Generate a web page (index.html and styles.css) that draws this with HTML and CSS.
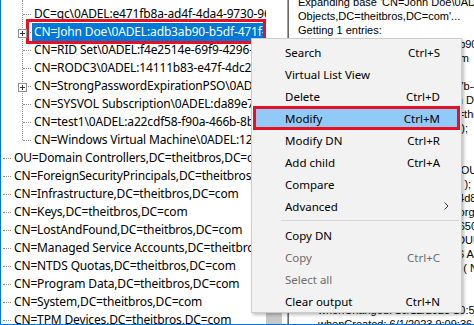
FILE: index.html
```html
<!DOCTYPE html>
<html lang="en">
<head>
    <meta charset="UTF-8">
    <title>Ldp - Deleted Objects</title>
    <link rel="stylesheet" href="styles.css">
</head>
<body>

    <div class="window">
        <div class="tree">
            <div class="group">
                <div class="node"><span class="label">DC=qc\0ADEL:e471fb8a-ad4f-4da4-9730-961c3f0a7e2b</span></div>
                <div class="node selected"><span class="expander"></span><span class="label">CN=John Doe\0ADEL:adb3ab90-b5df-471f-8b7e-2c9d4e1a5f03</span></div>
                <div class="node"><span class="label">CN=RID Set\0ADEL:f4e2514e-69f9-4296-a1c3-7d0e5b9f2a64</span></div>
                <div class="node"><span class="label">CN=RODC3\0ADEL:14111b83-e47f-4dc2-b9a0-3e6f1c8d5b27</span></div>
                <div class="node"><span class="expander"></span><span class="label">CN=StrongPasswordExpirationPSO\0ADEL:0c5d7e21-4a9b-4f3e-8d61-b2a7c9e05f18</span></div>
                <div class="node"><span class="label">CN=SYSVOL Subscription\0ADEL:da89e7b4-1f2c-4e6a-9b0d-5c8a3f7e2d91</span></div>
                <div class="node"><span class="label">CN=test1\0ADEL:a22cdf58-f90a-466b-8b7c-4e1d9a2f6c03</span></div>
                <div class="node"><span class="label">CN=Windows Virtual Machine\0ADEL:12c4f8e0-7b3d-4a59-a6e1-0d9c2b5f8e74</span></div>
            </div>
            <div class="node"><span class="label">OU=Domain Controllers,DC=theitbros,DC=com</span></div>
            <div class="node"><span class="label">CN=ForeignSecurityPrincipals,DC=theitbros,DC=com</span></div>
            <div class="node"><span class="label">CN=Infrastructure,DC=theitbros,DC=com</span></div>
            <div class="node"><span class="label">CN=Keys,DC=theitbros,DC=com</span></div>
            <div class="node"><span class="label">CN=LostAndFound,DC=theitbros,DC=com</span></div>
            <div class="node"><span class="label">CN=Managed Service Accounts,DC=theitbros,DC=com</span></div>
            <div class="node"><span class="label">CN=NTDS Quotas,DC=theitbros,DC=com</span></div>
            <div class="node"><span class="label">CN=Program Data,DC=theitbros,DC=com</span></div>
            <div class="node"><span class="label">CN=System,DC=theitbros,DC=com</span></div>
            <div class="node"><span class="label">CN=TPM Devices,DC=theitbros,DC=com</span></div>

            <div class="tree-mark"></div>
        </div>

        <div class="vscroll"><div class="thumb"></div></div>

        <div class="output">
            <div class="lines">
                <div>Expanding base 'CN=John Doe\0ADEL:adb3ab90-b5df-471f-8b7e-2c9d4e1a5f03,CN=Deleted</div>
                <div>Objects,DC=theitbros,DC=com'...</div>
                <div>Getting 1 entries:</div>
                <div>Dn: CN=John Doe\0ADEL:adb3ab90-b5df-471f-8b7e-2c9d4e1a5f03,CN=Deleted</div>
                <div class="a">Objects,DC=theitbros,DC=com</div>
                <div class="a">accountExpires: 0 (never);</div>
                <div class="a">objectGUID: 8c4e2a93-3d5e7b-4f21-a8c6</div>
                <div class="a">msDS-LastKnownRDN:  John Doe;</div>
                <div class="a">lastKnownParent: OU=IT,DC=theitbros,DC=com;</div>
                <div class="a">badPasswordTime:   0 (never);</div>
                <div class="a">badPwdCount: 0;</div>
                <div class="a">cn: John Doe;</div>
                <div class="a">distinguishedName: CN=Joe,OU=IT,DC=theitbros,DC=com</div>
                <div class="a">instanceType: 0x4 = ( WRITE );</div>
                <div class="a">objectGUID: 9f4b7c21-6e0a-4d8b-a2c6-0e1f5d3b9a47;</div>
                <div class="a">objectClass (4): top; person; organizationalPerson; user;</div>
                <div class="a">objectSid: S-1-5-21-1937481650-2846037712-1104;</div>
                <div class="a">primaryGroupID: 513 = ( GROUP_RID_USERS );</div>
                <div class="a">pwdLastSet: 6/1/2023 9:09:36 AM;</div>
                <div class="a">userAccountControl: 0x200 = ( NORMAL_ACCOUNT );</div>
                <div class="a">sAMAccountName: jdoe;</div>
                <div class="a">uSNChanged: 41277;</div>
                <div class="a">whenChanged: 10/12/2023 10:55:12 AM;</div>
                <div class="a">whenCreated: 6/1/2023 9:09:36 AM;</div>
            </div>
        </div>

        <div class="menu">
            <div class="item"><span>Search</span><span>Ctrl+S</span></div>
            <div class="item"><span>Virtual List View</span></div>
            <div class="item"><span>Delete</span><span>Ctrl+D</span></div>
            <div class="item active"><span>Modify</span><span>Ctrl+M</span></div>
            <div class="item"><span>Modify DN</span><span>Ctrl+R</span></div>
            <div class="item"><span>Add child</span><span>Ctrl+A</span></div>
            <div class="item"><span>Compare</span></div>
            <div class="item sub"><span>Advanced</span>
                <svg width="5" height="8" viewBox="0 0 5 8"><path d="M0.5 0.5 L4 4 L0.5 7.5" fill="none" stroke="#333" stroke-width="1"/></svg>
            </div>
            <div class="sep"></div>
            <div class="item"><span>Copy DN</span></div>
            <div class="item off"><span>Copy</span><span>Ctrl+C</span></div>
            <div class="item off"><span>Select all</span></div>
            <div class="item"><span>Clear output</span><span>Ctrl+N</span></div>
        </div>
    </div>

</body>
</html>
```

FILE: styles.css
```css
body {
    margin: 0;
    background: #fff;
    font-family: "Noto Sans", sans-serif;
    color: #000;
}

.window {
    width: 474px;
    height: 325px;
    box-sizing: border-box;
    border-left: 1px solid #0078d7;
    border-bottom: 1px solid #0078d7;
    display: flex;
    position: relative;
    overflow: hidden;
}

/* left tree */
.tree {
    width: 265px;
    flex: none;
    padding-top: 5px;
    position: relative;
    overflow: hidden;
    font-size: 12px;
    letter-spacing: -0.15px;
}

.node {
    height: 18px;
    line-height: 18px;
    position: relative;
    white-space: nowrap;
    padding-left: 13px;
}

.node::after {
    content: "";
    position: absolute;
    left: 2px;
    top: 9px;
    width: 8px;
    border-top: 1px dotted #8f8f8f;
}

.group {
    position: relative;
}

.group::before {
    content: "";
    position: absolute;
    left: 21px;
    top: -5px;
    bottom: 9px;
    border-left: 1px dotted #8f8f8f;
}

.group .node {
    padding-left: 33px;
}

.group .node::after {
    left: 22px;
}

.expander {
    position: absolute;
    left: 17px;
    top: 6px;
    width: 9px;
    height: 9px;
    box-sizing: border-box;
    border: 1px solid #919191;
    background: #fff;
    z-index: 1;
}

.expander::before,
.expander::after {
    content: "";
    position: absolute;
    background: #333;
}

.expander::before {
    left: 1px;
    top: 3px;
    width: 5px;
    height: 1px;
}

.expander::after {
    left: 3px;
    top: 1px;
    width: 1px;
    height: 5px;
}

.selected .label {
    display: inline-block;
    background: #0078d7;
    color: #fff;
    padding: 0 2px;
    margin-left: -2px;
}

.tree-mark {
    position: absolute;
    left: 25px;
    top: 19px;
    width: 240px;
    height: 25px;
    box-sizing: border-box;
    border: 3px solid #e81123;
}

.vscroll {
    width: 21px;
    flex: none;
    display: flex;
    align-items: flex-end;
}

.thumb {
    width: 16px;
    height: 14px;
    background: #c8c8c8;
}

/* right output pane */
.output {
    flex: 1;
    border-left: 1px solid #a0a0a0;
    box-shadow: inset 1px 0 #696969;
    padding-left: 10px;
    font-family: "Liberation Sans", Arial, sans-serif;
    font-size: 11px;
    line-height: 14px;
    overflow: hidden;
}

.lines {
    margin-top: -5px;
}

.lines div {
    white-space: pre;
}

.lines .a {
    padding-left: 20px;
}

/* context menu */
.menu {
    position: absolute;
    left: 250px;
    top: 38px;
    width: 211px;
    box-sizing: border-box;
    border: 1px solid #ccc;
    background: #f2f2f2;
    padding: 2px 2px 0;
    box-shadow: 2px 2px 3px rgba(0, 0, 0, 0.25);
    font-size: 11.5px;
}

.item {
    height: 22px;
    display: flex;
    align-items: center;
    justify-content: space-between;
    padding: 0 19px 0 31px;
}

.item.sub {
    padding-right: 10px;
}

.item.off {
    color: #6d6d6d;
}

.item.active {
    background: #91c9f7;
    outline: 3px solid #e81123;
    outline-offset: -2px;
}

.sep {
    height: 1px;
    background: #d7d7d7;
    margin: 3px 0 3px 27px;
}
```
